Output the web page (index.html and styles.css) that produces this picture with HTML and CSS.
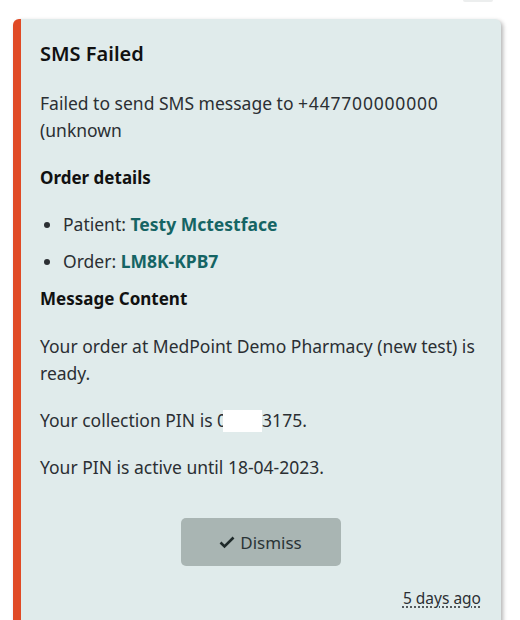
FILE: index.html
```html
<!DOCTYPE html>
<html lang="en">
  <head>
    <meta charset="UTF-8" />
    <title>Notifications</title>
    <link rel="stylesheet" href="styles.css">
  </head>
  <body>
    <div class="top-row">
      <div class="prev-stub"></div>
    </div>
    <div class="card">
      <h3 class="card-title">SMS Failed</h3>
      <p>Failed to send SMS message to <span class="phone">+447700000000</span> (unknown</p>
      <h4>Order details</h4>
      <ul class="details">
        <li>Patient: <a href="#">Testy Mctestface</a></li>
        <li>Order: <a href="#">LM8K-KPB7</a></li>
      </ul>
      <h4 class="content-title">Message Content</h4>
      <p>Your order at MedPoint Demo Pharmacy (new test) is ready.</p>
      <p>Your collection PIN is 0<span class="redact"></span>3175.</p>
      <p>Your PIN is active until 18-04-2023.</p>
      <div class="actions">
        <button class="dismiss">
          <svg width="16" height="14" viewBox="0 0 16 14"><path d="M1.5 7.5 L5.5 11.5 L14.5 2.5" fill="none" stroke="#1f2a2a" stroke-width="2.6"/></svg>
          Dismiss
        </button>
      </div>
      <div class="meta">
        <span class="time" title="2023-04-13">5 days ago</span>
      </div>
    </div>
  </body>
</html>
```
FILE: styles.css
```css
body {
  font-family: "Noto Sans", "Open Sans", sans-serif;
  margin: 0;
  background-color: #ffffff;
  color: #2b2f33;
  overflow: hidden;
}
.top-row {
  display: flex;
  justify-content: flex-end;
  padding-right: 27px;
}
.prev-stub {
  width: 30px;
  height: 2px;
  background-color: #eceeee;
  border-radius: 0 0 4px 4px;
}
.card {
  margin: 17px 19px 0 13px;
  background-color: #e0ebeb;
  border-left: 8px solid #e04a25;
  border-radius: 6px;
  box-shadow: 2px 2px 4px rgba(0, 0, 0, 0.3);
  padding: 22px 20px 24px 19px;
  font-size: 17.5px;
  line-height: 27px;
}
.card-title {
  font-size: 20px;
  font-weight: 600;
  margin: 0 0 23px;
  color: #111;
  line-height: 26px;
}
.card p {
  margin: 0 0 20px;
}
.phone {
  letter-spacing: 0.8px;
}
h4 {
  font-size: 17px;
  font-weight: 700;
  margin: 0;
  color: #111;
  line-height: 27px;
}
.details {
  margin: 20px 0 8px;
  padding-left: 23px;
}
.details li {
  margin-bottom: 10px;
}
.details a {
  color: #156464;
  font-weight: 700;
  text-decoration: none;
}
.content-title {
  margin-bottom: 21px;
}
.redact {
  display: inline-block;
  width: 39px;
  height: 22px;
  margin-left: -4px;
  vertical-align: -5px;
  background-color: #ffffff;
}
.actions {
  display: flex;
  justify-content: center;
  margin-top: 37px;
}
.dismiss {
  width: 160px;
  height: 48px;
  border: none;
  border-radius: 5px;
  background-color: #a9b5b3;
  color: #2b3436;
  font-family: inherit;
  font-size: 17px;
  display: flex;
  align-items: center;
  justify-content: center;
  gap: 5px;
  cursor: pointer;
}
.meta {
  display: flex;
  justify-content: flex-end;
  margin-top: 19px;
}
.time {
  font-size: 15.5px;
  text-decoration: underline dotted;
  text-underline-offset: 3px;
}
```
